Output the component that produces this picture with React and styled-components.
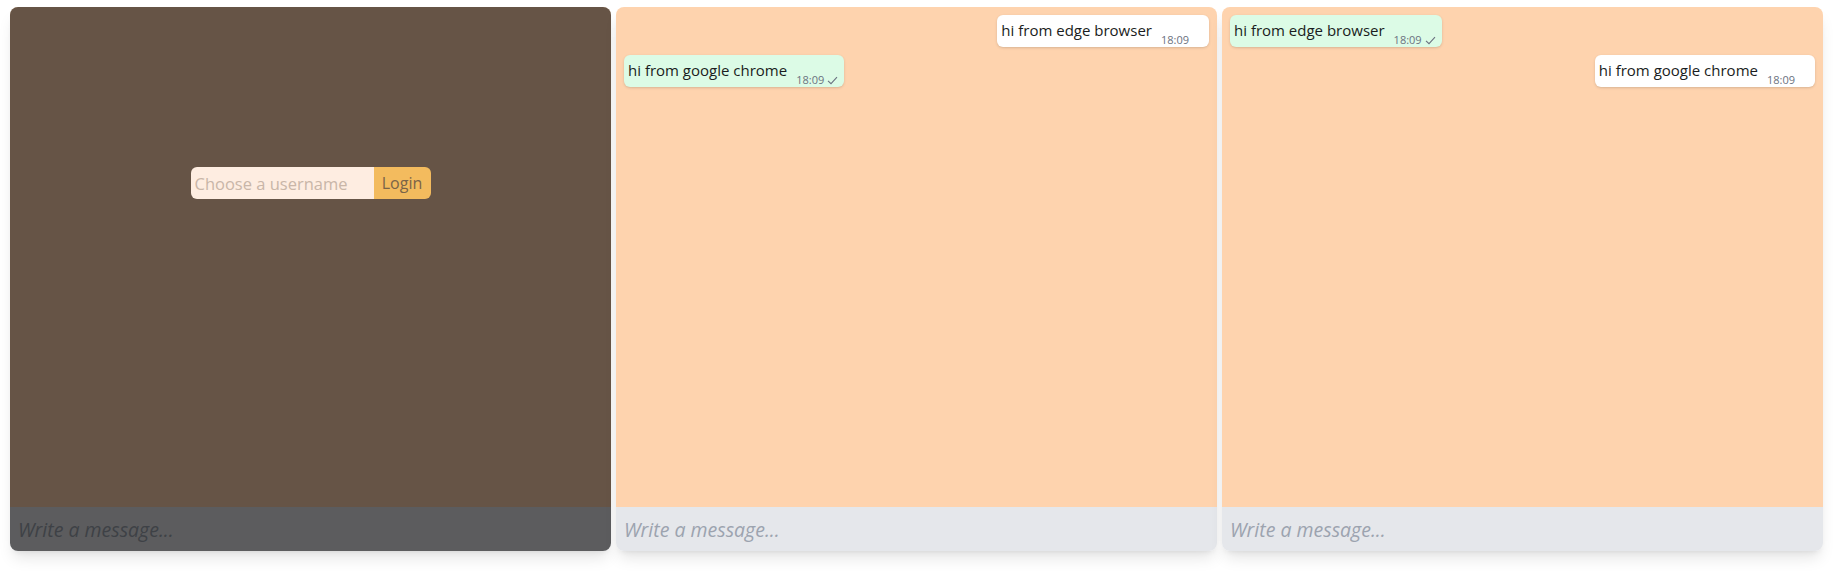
import React from "react";
import styled, { createGlobalStyle } from "styled-components";

const GlobalStyle = createGlobalStyle`
  html, body { margin: 0; padding: 0; background: #ffffff; }
  body { font-family: "Open Sans", "Noto Sans", sans-serif; }
  *, *::before, *::after { box-sizing: border-box; }
`;

const Page = styled.main`
  display: grid;
  grid-template-columns: repeat(3, 601px);
  column-gap: 5px;
  padding: 7px 0 21px 10px;
`;

const Window = styled.section`
  position: relative;
  height: 544px;
  display: flex;
  flex-direction: column;
  border-radius: 8px;
  overflow: hidden;
  box-shadow: 0 10px 15px -3px rgba(0, 0, 0, 0.1), 0 4px 6px -4px rgba(0, 0, 0, 0.1);
`;

const MessageList = styled.div`
  flex: 1;
  background: #fed3ae;
  padding: 8px 8px;
  display: flex;
  flex-direction: column;
  gap: 8px;
`;

const Bubble = styled.div`
  align-self: ${(p) => (p.$own ? "flex-start" : "flex-end")};
  display: flex;
  align-items: flex-end;
  padding: 3px 6px 5px 4px;
  background: ${(p) => (p.$own ? "#dcfbe6" : "#ffffff")};
  border-radius: 6px;
  box-shadow: 0 1px 3px rgba(0, 0, 0, 0.12), 0 1px 2px -1px rgba(0, 0, 0, 0.1);
`;

const Text = styled.span`
  font-size: 15px;
  line-height: 24px;
  color: #1a1d21;
`;

const Meta = styled.span`
  display: flex;
  align-items: center;
  margin-left: 9px;
  margin-bottom: -5px;
  font-size: 11px;
  line-height: 14px;
  color: #6b7280;
`;

const Check = styled.svg`
  margin-left: 3px;
  width: 11px;
  height: 9px;
  visibility: ${(p) => (p.$shown ? "visible" : "hidden")};
`;

const Composer = styled.div`
  height: 44px;
  flex: none;
  display: flex;
  align-items: center;
  padding: 0 8px;
  background: #e5e7eb;
`;

const ComposerInput = styled.input`
  width: 100%;
  border: none;
  outline: none;
  background: transparent;
  font-family: "Open Sans", "Noto Sans", sans-serif;
  font-style: italic;
  font-size: 19.5px;
  color: #374151;
  padding: 0;
  &::placeholder { color: #9ca3af; }
`;

const Overlay = styled.div`
  position: absolute;
  inset: 0;
  background: rgba(0, 0, 0, 0.6);
  display: flex;
  justify-content: center;
  align-items: flex-start;
  padding-top: 160px;
`;

const LoginForm = styled.form`
  display: flex;
  width: 240px;
  height: 32px;
  border-radius: 6px;
  overflow: hidden;
`;

const UsernameInput = styled.input`
  width: 183px;
  border: none;
  outline: none;
  background: #feede1;
  padding: 0 4px;
  font-family: "Open Sans", "Noto Sans", sans-serif;
  font-size: 16.5px;
  color: #3a2f25;
  &::placeholder { color: #c9b6a8; }
`;

const LoginButton = styled.button`
  flex: 1;
  border: none;
  background: #f3bb5e;
  color: #7a6448;
  font-family: "Open Sans", "Noto Sans", sans-serif;
  font-size: 16px;
  font-weight: 500;
  padding: 0;
  cursor: pointer;
`;

const Message = ({ own, text, time }) => (
  <Bubble $own={own}>
    <Text>{text}</Text>
    <Meta>
      {time}
      <Check $shown={own} viewBox="0 0 11 9" fill="none">
        <polyline points="1,4.8 4,7.6 10,1.2" stroke="#6b7280" strokeWidth="1.1" />
      </Check>
    </Meta>
  </Bubble>
);

const ChatWindow = ({ messages, locked }) => (
  <Window>
    <MessageList>
      {messages.map((m, i) => (
        <Message key={i} {...m} />
      ))}
    </MessageList>
    <Composer>
      <ComposerInput placeholder="Write a message..." />
    </Composer>
    {locked && (
      <Overlay>
        <LoginForm onSubmit={(e) => e.preventDefault()}>
          <UsernameInput placeholder="Choose a username" />
          <LoginButton type="submit">Login</LoginButton>
        </LoginForm>
      </Overlay>
    )}
  </Window>
);

export default function App() {
  return (
    <>
      <GlobalStyle />
      <Page>
        <ChatWindow locked messages={[]} />
        <ChatWindow
          messages={[
            { own: false, text: "hi from edge browser", time: "18:09" },
            { own: true, text: "hi from google chrome", time: "18:09" },
          ]}
        />
        <ChatWindow
          messages={[
            { own: true, text: "hi from edge browser", time: "18:09" },
            { own: false, text: "hi from google chrome", time: "18:09" },
          ]}
        />
      </Page>
    </>
  );
}
